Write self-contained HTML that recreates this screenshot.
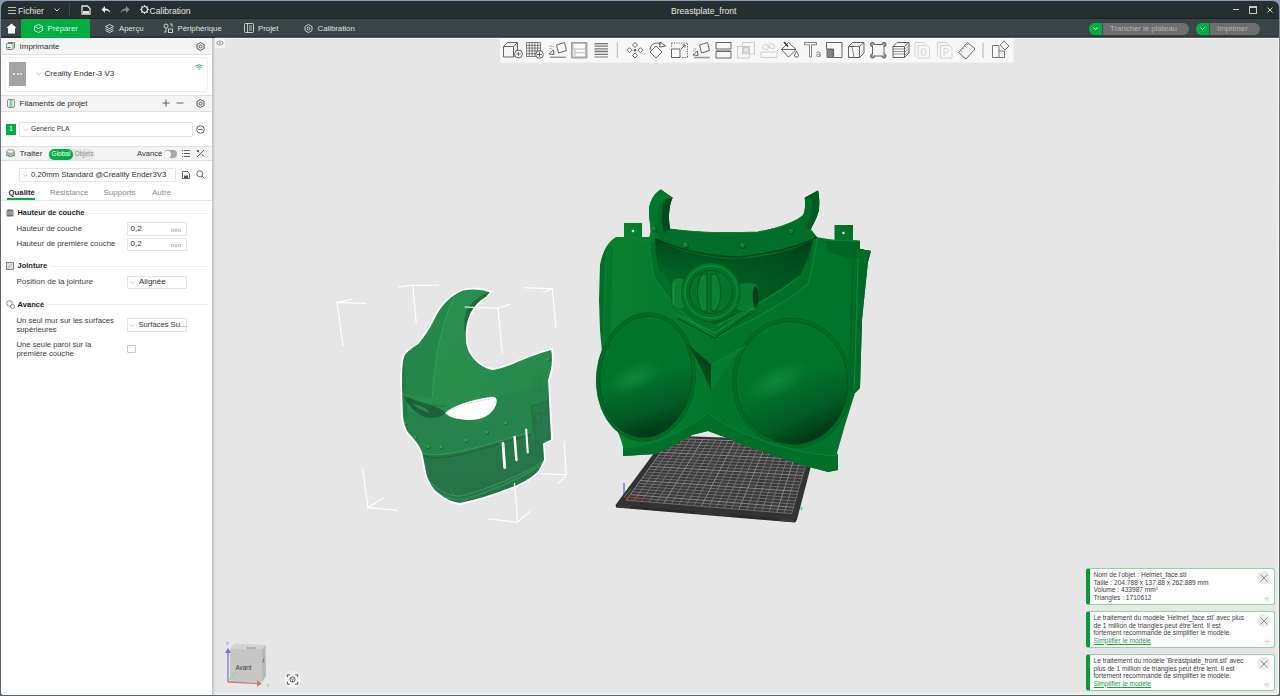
<!DOCTYPE html>
<html><head><meta charset="utf-8">
<style>
*{margin:0;padding:0;box-sizing:border-box}
html,body{width:1280px;height:696px;overflow:hidden;background:linear-gradient(180deg,#8a9ab2 0,#6f7883 60px,#5c6167 300px,#5e6369 696px);font-family:"Liberation Sans",sans-serif;}
.a{position:absolute}
#win{position:absolute;left:1px;top:1px;width:1278px;height:694px;overflow:hidden;border-radius:6px 6px 3px 3px;background:#e6e6e6}
#pg{position:absolute;left:-1px;top:-1px;width:1280px;height:696px}
.tt{color:#e6e8e8;font-size:8.6px;line-height:12px;white-space:nowrap}
.tab{color:#dfe2e2;font-size:7.8px;line-height:10px;white-space:nowrap}
.pt{color:#3a3a3a;font-size:8px;line-height:10px;white-space:nowrap}
.hd{color:#303030;font-size:8px;line-height:10px;white-space:nowrap}
.bold{font-weight:bold;color:#1e1e1e}
.inp{background:#fff;border:1px solid #e4e4e4;border-radius:1px}
.nt{color:#3c3c3c;font-size:6.6px;line-height:7.4px;white-space:nowrap}
svg{position:absolute;overflow:visible}
</style></head><body>
<div id="win"><div id="pg">
<!-- TITLE BAR -->
<div class="a" style="left:0;top:0;width:1280px;height:19px;background:#262e30;border-bottom:1px solid #1d2325"></div>
<div class="a" style="left:0;top:19px;width:1280px;height:19px;background:#3b4446;border-bottom:2px solid #2e3537"></div>
<!-- hamburger -->
<div class="a" style="left:8px;top:6.5px;width:8px;height:1.3px;background:#bcbcbc"></div>
<div class="a" style="left:8px;top:9.6px;width:8px;height:1.3px;background:#bcbcbc"></div>
<div class="a" style="left:8px;top:12.7px;width:8px;height:1.3px;background:#bcbcbc"></div>
<div class="a tt" style="left:18px;top:5px;">Fichier</div>
<svg style="left:54px;top:8px" width="6" height="4"><path d="M0.5 0.5 L3 3 L5.5 0.5" stroke="#d0d0d0" fill="none" stroke-width="1"/></svg>
<div class="a" style="left:69px;top:3px;width:1px;height:14px;background:#3e4648"></div>
<!-- save -->
<svg style="left:81px;top:5px" width="10" height="10"><path d="M1 1 H6.5 L9 3.5 V9 H1 Z" stroke="#e0e0e0" fill="none" stroke-width="1.3"/><rect x="2" y="6" width="6" height="2.5" fill="#e0e0e0"/></svg>
<!-- undo -->
<svg style="left:101px;top:5px" width="10" height="9"><path d="M4 1 L0.5 4.5 L4 8 V5.5 C6.5 5.5 8 6 9.5 8 C9 5 7 3.5 4 3.5 Z" fill="#e8e8e8"/></svg>
<!-- redo -->
<svg style="left:120px;top:5px" width="10" height="9"><path d="M6 1 L9.5 4.5 L6 8 V5.5 C3.5 5.5 2 6 0.5 8 C1 5 3 3.5 6 3.5 Z" fill="#8a9090"/></svg>
<!-- calib gear -->
<svg style="left:140px;top:5px" width="9" height="9"><circle cx="4.5" cy="4.5" r="3" stroke="#e0e0e0" fill="none" stroke-width="1.2"/><path d="M4.5 0 V2 M4.5 7 V9 M0 4.5 H2 M7 4.5 H9 M1.3 1.3 L2.6 2.6 M6.4 6.4 L7.7 7.7 M7.7 1.3 L6.4 2.6 M2.6 6.4 L1.3 7.7" stroke="#e0e0e0" stroke-width="1.2"/></svg>
<div class="a tt" style="left:149.5px;top:5px;">Calibration</div>
<div class="a tt" style="left:671px;top:5px;">Breastplate_front</div>
<!-- window controls -->
<div class="a" style="left:1233px;top:9px;width:6px;height:1px;background:#c8c8c8"></div>
<div class="a" style="left:1249px;top:6px;width:8px;height:8px;border:1px solid #c8c8c8;border-top-width:2px"></div>
<svg style="left:1267px;top:7px" width="6" height="6"><path d="M0.5 0.5 L5.5 5.5 M5.5 0.5 L0.5 5.5" stroke="#d0d0d0" stroke-width="1"/></svg>

<!-- TABS -->
<svg style="left:6px;top:23px" width="11" height="11"><path d="M5.5 0.5 L10.5 5 H9 V10.5 H2 V5 H0.5 Z" fill="#ffffff"/></svg>
<div class="a" style="left:21px;top:19px;width:69px;height:19px;background:#00ae42"></div>
<svg style="left:34px;top:24px" width="9" height="9"><path d="M4.5 0.5 L8.5 2.5 V6.5 L4.5 8.5 L0.5 6.5 V2.5 Z M0.5 2.5 L4.5 4.5 L8.5 2.5" stroke="#d8f5e0" fill="none" stroke-width="0.9"/></svg>
<div class="a tab" style="left:47.5px;top:24px;color:#d8f5e2">Préparer</div>
<svg style="left:105px;top:24px" width="9" height="9"><path d="M4.5 0.5 L8.5 2.5 L4.5 4.5 L0.5 2.5 Z M0.5 4.5 L4.5 6.5 L8.5 4.5 M0.5 6.5 L4.5 8.5 L8.5 6.5" stroke="#d8dcdc" fill="none" stroke-width="0.9"/></svg>
<div class="a tab" style="left:119px;top:24px;">Aperçu</div>
<svg style="left:163px;top:23px" width="10" height="10"><circle cx="3" cy="3" r="2" stroke="#d8dcdc" fill="none" stroke-width="0.9"/><rect x="5.5" y="6" width="4" height="3.5" stroke="#d8dcdc" fill="none" stroke-width="0.9"/><path d="M3 5 V9 H1 M7 1 H9 V4" stroke="#d8dcdc" fill="none" stroke-width="0.9"/></svg>
<div class="a tab" style="left:177.5px;top:24px;">Périphérique</div>
<svg style="left:244px;top:23px" width="10" height="10"><rect x="0.5" y="0.5" width="9" height="9" rx="1" stroke="#d8dcdc" fill="none" stroke-width="0.9"/><path d="M3.5 0.5 V9.5 M5 3 H8 M5 5 H8 M5 7 H8" stroke="#d8dcdc" stroke-width="0.8"/></svg>
<div class="a tab" style="left:258px;top:24px;">Projet</div>
<svg style="left:304px;top:24px" width="9" height="9"><path d="M4.5 0.5 L8 2.5 V6.5 L4.5 8.5 L1 6.5 V2.5 Z" stroke="#d8dcdc" fill="none" stroke-width="0.9"/><circle cx="4.5" cy="4.5" r="1.4" stroke="#d8dcdc" fill="none" stroke-width="0.9"/></svg>
<div class="a tab" style="left:317.5px;top:24px;">Calibration</div>
<!-- slice / print buttons -->
<div class="a" style="left:1089px;top:22.5px;width:100px;height:12px;border-radius:6px;background:#6e6e6e;overflow:hidden"><div class="a" style="left:0;top:0;width:12.5px;height:12px;background:#00ae42"></div><div class="a" style="left:12.5px;top:0;width:1px;height:12px;background:#4a5052"></div></div>
<svg style="left:1093px;top:27px" width="5" height="3"><path d="M0.5 0.5 L2.5 2.5 L4.5 0.5" stroke="#fff" fill="none" stroke-width="0.9"/></svg>
<div class="a tab" style="left:1110px;top:24px;color:#b4b4b4">Trancher le plateau</div>
<div class="a" style="left:1196px;top:22.5px;width:64px;height:12px;border-radius:6px;background:#6e6e6e;overflow:hidden"><div class="a" style="left:0;top:0;width:12.5px;height:12px;background:#00ae42"></div><div class="a" style="left:12.5px;top:0;width:1px;height:12px;background:#4a5052"></div></div>
<svg style="left:1200px;top:27px" width="5" height="3"><path d="M0.5 0.5 L2.5 2.5 L4.5 0.5" stroke="#fff" fill="none" stroke-width="0.9"/></svg>
<div class="a tab" style="left:1217px;top:24px;color:#b4b4b4">Imprimer</div>

<!-- LEFT PANEL -->
<div class="a" style="left:0;top:38px;width:212px;height:658px;background:#fff"></div>
<div class="a" style="left:212px;top:38px;width:3px;height:658px;background:linear-gradient(90deg,#bdbdbd,#d6d6d6 60%,#e0e0e0)"></div>
<!-- Imprimante header -->
<div class="a" style="left:0;top:38px;width:212px;height:17px;background:#f4f4f4;border-bottom:1px solid #e0e0e0"></div>
<svg style="left:6px;top:42px" width="9" height="8"><rect x="0.5" y="1.5" width="6.5" height="6" rx="0.8" stroke="#707070" fill="none" stroke-width="0.9"/><path d="M2 0.5 H8.5 V6.5" stroke="#707070" fill="none" stroke-width="0.9"/><rect x="1.5" y="5" width="3" height="1.3" fill="#00ae42"/></svg>
<div class="a hd" style="left:19.5px;top:42px;">Imprimante</div>
<svg style="left:196px;top:42px" width="9" height="9"><path d="M4.5 0.6 L8 2.5 V6.5 L4.5 8.4 L1 6.5 V2.5 Z" stroke="#555" fill="none" stroke-width="1"/><circle cx="4.5" cy="4.5" r="1.5" stroke="#555" fill="none" stroke-width="1"/></svg>
<!-- printer card -->
<div class="a" style="left:4px;top:57px;width:204px;height:35px;border:1px solid #efefef;border-radius:4px;background:#fff"></div>
<div class="a" style="left:9px;top:62px;width:17px;height:24px;background:#a3a3a3"></div>
<div class="a" style="left:13px;top:73px;width:2px;height:1.5px;background:#e0e0e0"></div>
<div class="a" style="left:16.5px;top:73px;width:2px;height:1.5px;background:#e0e0e0"></div>
<div class="a" style="left:20px;top:73px;width:2px;height:1.5px;background:#e0e0e0"></div>
<svg style="left:36px;top:72px" width="6" height="4"><path d="M0.5 0.5 L3 3 L5.5 0.5" stroke="#b0b0b0" fill="none" stroke-width="0.8"/></svg>
<div class="a hd" style="left:44.5px;top:69px;">Creality Ender-3 V3</div>
<svg style="left:195px;top:64px" width="8" height="6"><path d="M0.5 2 Q4 -0.5 7.5 2 M1.8 3.5 Q4 2 6.2 3.5" stroke="#00ae42" fill="none" stroke-width="0.9"/><circle cx="4" cy="5" r="0.7" fill="#00ae42"/></svg>
<!-- Filaments header -->
<div class="a" style="left:0;top:95px;width:212px;height:17px;background:#f4f4f4;border-top:1px solid #e0e0e0;border-bottom:1px solid #e0e0e0"></div>
<svg style="left:7px;top:99px" width="8" height="9"><rect x="0.5" y="0.5" width="7" height="8" rx="1.5" stroke="#808080" fill="none" stroke-width="0.9"/><rect x="2.5" y="1" width="3" height="7" fill="#7fd69f"/></svg>
<div class="a hd" style="left:19.5px;top:99px;">Filaments de projet</div>
<svg style="left:162px;top:99px" width="8" height="8"><path d="M4 0.5 V7.5 M0.5 4 H7.5" stroke="#666" stroke-width="1.1"/></svg>
<svg style="left:176px;top:99px" width="8" height="8"><path d="M0.5 4 H7.5" stroke="#666" stroke-width="1.1"/></svg>
<svg style="left:196px;top:99px" width="9" height="9"><path d="M4.5 0.6 L8 2.5 V6.5 L4.5 8.4 L1 6.5 V2.5 Z" stroke="#555" fill="none" stroke-width="1"/><circle cx="4.5" cy="4.5" r="1.5" stroke="#555" fill="none" stroke-width="1"/></svg>
<!-- filament row -->
<div class="a" style="left:6px;top:124px;width:10px;height:10.5px;background:#00ae42;color:#fff;font-size:8px;line-height:10.5px;text-align:center">1</div>
<div class="a inp" style="left:19px;top:122px;width:174px;height:14.5px;"></div>
<svg style="left:23px;top:128px" width="5" height="3"><path d="M0.5 0.5 L2.5 2.5 L4.5 0.5" stroke="#b8b8b8" fill="none" stroke-width="0.8"/></svg>
<div class="a pt" style="left:31px;top:124px;font-size:6.8px;">Generic PLA</div>
<svg style="left:196px;top:125px" width="9" height="9"><circle cx="4.5" cy="4.5" r="3.8" stroke="#555" fill="none" stroke-width="0.9"/><path d="M2.3 4.5 H6.7" stroke="#555" stroke-width="0.9"/></svg>
<!-- Traiter header -->
<div class="a" style="left:0;top:146px;width:212px;height:15px;background:#f4f4f4;border-top:1px solid #e0e0e0;border-bottom:1px solid #e0e0e0"></div>
<svg style="left:6px;top:149px" width="9" height="9"><ellipse cx="4.5" cy="2.5" rx="3.8" ry="1.8" stroke="#808080" fill="none" stroke-width="0.8"/><path d="M0.7 2.5 V6.5 Q4.5 9 8.3 6.5 V2.5 M0.7 4.5 Q4.5 7 8.3 4.5" stroke="#808080" fill="none" stroke-width="0.8"/><path d="M0.7 6 Q4.5 8.5 8.3 6" stroke="#00ae42" fill="none" stroke-width="0.9"/></svg>
<div class="a hd" style="left:19.5px;top:148.5px;">Traiter</div>
<div class="a" style="left:49px;top:149px;width:46px;height:10.5px;border-radius:5.25px;background:#e6e6e6"></div>
<div class="a" style="left:49px;top:149px;width:24px;height:10.5px;border-radius:5.25px;background:#00ae42"></div>
<div class="a" style="left:49px;top:150px;width:24px;font-size:6.5px;line-height:8.5px;color:#fff;text-align:center">Global</div>
<div class="a" style="left:73px;top:150px;width:22px;font-size:6.5px;line-height:8.5px;color:#8c8c8c;text-align:center">Objets</div>
<div class="a hd" style="left:137px;top:148.5px;font-size:7.6px;">Avancé</div>
<div class="a" style="left:163.5px;top:150px;width:13.5px;height:8px;border-radius:4px;background:#a8a8a8"></div>
<div class="a" style="left:164px;top:150.5px;width:7px;height:7px;border-radius:50%;background:#fff"></div>
<svg style="left:182px;top:150px" width="8" height="7"><path d="M0 0.5 H1 M2 0.5 H8 M0 3.5 H1 M2 3.5 H8 M0 6.5 H1 M2 6.5 H8" stroke="#555" stroke-width="0.9"/></svg>
<svg style="left:196px;top:149px" width="9" height="9"><path d="M1 8 L8 1 M1 1.5 L3 3.5 M6 5.5 L8 7.5" stroke="#555" stroke-width="1"/><circle cx="2" cy="2" r="1" fill="#555"/></svg>
<!-- preset -->
<div class="a inp" style="left:19px;top:168px;width:157px;height:13.5px;"></div>
<svg style="left:23px;top:174px" width="5" height="3"><path d="M0.5 0.5 L2.5 2.5 L4.5 0.5" stroke="#b8b8b8" fill="none" stroke-width="0.8"/></svg>
<div class="a hd" style="left:31px;top:169.5px;font-size:7.8px">0.20mm Standard @Creality Ender3V3</div>
<svg style="left:182px;top:171px" width="8" height="8"><path d="M0.5 0.5 H5.5 L7.5 2.5 V7.5 H0.5 Z" stroke="#555" fill="none" stroke-width="0.9"/><rect x="2" y="4.5" width="4" height="2.5" fill="#555"/></svg>
<svg style="left:196px;top:170px" width="9" height="9"><circle cx="3.8" cy="3.8" r="3" stroke="#555" fill="none" stroke-width="0.9"/><path d="M6 6 L8.5 8.5" stroke="#555" stroke-width="1"/></svg>
<!-- tabs -->
<div class="a hd" style="left:8.5px;top:187.5px;font-weight:bold;color:#2a2a2a;font-size:7.8px">Qualité</div>
<div class="a hd" style="left:50px;top:187.5px;color:#8a8a8a;font-size:7.75px">Résistance</div>
<div class="a hd" style="left:103.5px;top:187.5px;color:#8a8a8a">Supports</div>
<div class="a hd" style="left:152px;top:187.5px;color:#8a8a8a">Autre</div>
<div class="a" style="left:7px;top:198px;width:28px;height:2px;background:#00ae42"></div>
<div class="a" style="left:0;top:200px;width:212px;height:1px;background:#e6e6e6"></div>
<!-- Hauteur de couche section -->
<svg style="left:6px;top:209px" width="8" height="8"><rect x="0.5" y="0.5" width="7" height="7" rx="1.5" fill="#6a6a6a"/><path d="M0.5 3 H7.5 M0.5 5 H7.5" stroke="#eee" stroke-width="0.7"/></svg>
<div class="a hd bold" style="left:17.5px;top:207.5px;font-size:7.45px">Hauteur de couche</div>
<div class="a" style="left:88px;top:213px;width:119px;height:1px;background:#ececec"></div>
<div class="a hd" style="left:16.5px;top:224px;color:#3c3c3c;font-size:7.75px">Hauteur de couche</div>
<div class="a inp" style="left:126.5px;top:222px;width:60px;height:13.5px;"></div>
<div class="a hd" style="left:130.5px;top:224px;color:#303030">0,2</div>
<div class="a" style="left:171px;top:227px;font-size:6px;line-height:7px;color:#8a8a8a">mm</div>
<div class="a hd" style="left:16.5px;top:239px;color:#3c3c3c;font-size:7.8px">Hauteur de première couche</div>
<div class="a inp" style="left:126.5px;top:237.5px;width:60px;height:13.5px;"></div>
<div class="a hd" style="left:130.5px;top:239px;color:#303030">0,2</div>
<div class="a" style="left:171px;top:242px;font-size:6px;line-height:7px;color:#8a8a8a">mm</div>
<!-- Jointure -->
<svg style="left:6px;top:262px" width="8" height="8"><rect x="0.5" y="0.5" width="7" height="7" stroke="#777" fill="#ddd" stroke-width="0.9"/><path d="M2.5 5.5 L5.5 2.5" stroke="#888" stroke-width="0.7"/></svg>
<div class="a hd bold" style="left:17.5px;top:261px;font-size:7.5px">Jointure</div>
<div class="a" style="left:50px;top:266px;width:157px;height:1px;background:#ececec"></div>
<div class="a hd" style="left:16.5px;top:277px;color:#3c3c3c">Position de la jointure</div>
<div class="a inp" style="left:126.5px;top:275.5px;width:60px;height:13.5px;"></div>
<svg style="left:130px;top:281px" width="5" height="3"><path d="M0.5 0.5 L2.5 2.5 L4.5 0.5" stroke="#b8b8b8" fill="none" stroke-width="0.8"/></svg>
<div class="a hd" style="left:139px;top:277px;color:#303030">Alignée</div>
<!-- Avancé -->
<svg style="left:6px;top:300px" width="9" height="9"><circle cx="3.5" cy="3.5" r="2.8" stroke="#777" fill="none" stroke-width="0.9"/><circle cx="6.5" cy="6.5" r="2" stroke="#777" fill="#fff" stroke-width="0.9"/></svg>
<div class="a hd bold" style="left:17.5px;top:299.5px;font-size:7.6px">Avancé</div>
<div class="a" style="left:46px;top:304px;width:161px;height:1px;background:#ececec"></div>
<div class="a hd" style="left:16.5px;top:316px;color:#3c3c3c;font-size:7.7px">Un seul mur sur les surfaces</div>
<div class="a hd" style="left:16.5px;top:324.5px;color:#3c3c3c;font-size:7.7px">supérieures</div>
<div class="a inp" style="left:126.5px;top:318px;width:60px;height:13.5px;"></div>
<svg style="left:130px;top:323.5px" width="5" height="3"><path d="M0.5 0.5 L2.5 2.5 L4.5 0.5" stroke="#b8b8b8" fill="none" stroke-width="0.8"/></svg>
<div class="a hd" style="left:138.5px;top:319.5px;color:#303030;font-size:7.6px">Surfaces Su...</div>
<div class="a hd" style="left:16.5px;top:339.5px;color:#3c3c3c;font-size:7.7px">Une seule paroi sur la</div>
<div class="a hd" style="left:16.5px;top:348.5px;color:#3c3c3c;font-size:7.7px">première couche</div>
<div class="a" style="left:127px;top:345px;width:8.5px;height:8px;border:1px solid #c8c8c8;border-radius:1px;background:#fff"></div>


<!--SCENE-->
<svg style="left:0;top:0" width="1280" height="696" viewBox="0 0 1280 696">
<defs>
<radialGradient id="domeL" cx="0.45" cy="0.45" r="0.6"><stop offset="0" stop-color="#259136"/><stop offset="0.6" stop-color="#1b7a2b"/><stop offset="1" stop-color="#0d5319"/></radialGradient>
<radialGradient id="domeR" cx="0.4" cy="0.42" r="0.62"><stop offset="0" stop-color="#25903a"/><stop offset="0.6" stop-color="#1a782b"/><stop offset="1" stop-color="#0b4f17"/></radialGradient>
<linearGradient id="bodyG" x1="0" y1="0" x2="1" y2="0"><stop offset="0" stop-color="#137024"/><stop offset="0.15" stop-color="#1c7f2c"/><stop offset="0.85" stop-color="#1b7d2c"/><stop offset="1" stop-color="#147326"/></linearGradient>
<linearGradient id="helmG" x1="0" y1="0" x2="0" y2="1"><stop offset="0" stop-color="#2a934f"/><stop offset="0.5" stop-color="#268b49"/><stop offset="1" stop-color="#207d3f"/></linearGradient>
</defs>
<!-- toolbar bg -->
<rect x="500" y="38" width="513.5" height="24.6" fill="#f7f7f7"/>
<g stroke="#555" stroke-width="0.9" fill="none" stroke-linejoin="round">
<!-- 1 cube+ -->
<path d="M503.5,46.5 H513.5 V57 H503.5 Z M503.5,46.5 L507.5,42.5 H517.5 L513.5,46.5 M517.5,42.5 V50.5 M513.5,57 L515,55.5"/>
<circle cx="518.5" cy="54" r="3.9" fill="#f7f7f7"/><path d="M518.5,51.8 V56.2 M516.3,54 H520.7" stroke-width="0.8"/>
<!-- 2 grid+ -->
<path d="M526.5,42.5 H540.5 V56.5 H526.5 Z M529.3,42.5 V56.5 M532.1,42.5 V56.5 M534.9,42.5 V56.5 M537.7,42.5 V56.5 M526.5,45.3 H540.5 M526.5,48.1 H540.5 M526.5,50.9 H540.5 M526.5,53.7 H540.5" stroke-width="0.7"/>
<circle cx="539.5" cy="54.5" r="3.8" fill="#f7f7f7"/><path d="M539.5,52 V57 M537,54.5 H542"/>
<!-- 3 orient -->
<path d="M556.5,45 L564.5,42.5 L566.5,50.5 L558.5,53 Z"/>
<path d="M549.5,46 L553.5,46.5 M549.5,48.5 L552.5,49" stroke-width="0.7" stroke-dasharray="1 0.8"/>
<path d="M549,54 L553.5,50 L554,54.5 Z"/>
<path d="M550,57.2 H566" stroke="#999" stroke-width="1.6"/>
<!-- 4 frame -->
<rect x="571.5" y="42.5" width="15.5" height="15.5" fill="#bbb" stroke="#999"/>
<rect x="573.5" y="44" width="11.5" height="4.5" fill="#fafafa" stroke="none"/>
<rect x="575.5" y="49.5" width="9.5" height="2.8" fill="#fafafa" stroke="none"/>
<rect x="575.5" y="53.3" width="9.5" height="3" fill="#fafafa" stroke="none"/>
<rect x="573.3" y="49.5" width="1.2" height="7" fill="#fafafa" stroke="none"/>
<!-- 5 layers -->
<path d="M594.5,43.5 H608 M594.5,46.2 H608 M594.5,48.9 H608 M594.5,51.6 H608 M594.5,54.3 H608 M594.5,57 H608" stroke="#777" stroke-width="1.2"/>
<path d="M594.5,45 H608 M594.5,50 H608" stroke="#bbb" stroke-width="1.4"/>
<!-- sep -->
<path d="M617.3,42.5 V58" stroke="#aaa"/>
<!-- 6 move -->
<path d="M635,42.5 L637.5,45 L635,47.5 L632.5,45 Z M635,53 L637.5,55.5 L635,58 L632.5,55.5 Z M627,50.2 L629.5,47.7 L632,50.2 L629.5,52.7 Z M638,50.2 L640.5,47.7 L643,50.2 L640.5,52.7 Z"/>
<circle cx="635" cy="50.2" r="0.9" fill="#555"/>
<!-- 7 rotate -->
<path d="M656,46 L662,52 L656,58 L650,52 Z"/>
<path d="M650,50 C650,44 656,41.5 661,44"/>
<path d="M660,42 L665.5,46 L659.5,47 Z"/>
<!-- 8 scale -->
<rect x="671.5" y="49" width="8.5" height="8.5"/>
<path d="M671.5,43 H687.5 V57.5 M671.5,43 V47 M682,57.5 H687.5" stroke-dasharray="1.2 1.2"/>
<path d="M681,49 L685,45 M682.5,45 H685 V47.5"/>
<!-- 9 lay flat -->
<path d="M699.5,45 L707.5,42.5 L709.5,50.5 L701.5,53 Z"/>
<path d="M693.5,49 L697,48.5 M693.5,51 L696,50.8" stroke-width="0.7" stroke-dasharray="1 0.8"/>
<path d="M693,55 L697.5,51 L698,55.5 Z"/>
<path d="M694,57.5 H710" stroke="#999" stroke-width="1.6"/>
<!-- 10 split -->
<rect x="716" y="42.5" width="15" height="6.5"/><rect x="716" y="51.5" width="15" height="6.5"/>
<path d="M716,50.2 H731" stroke="#aaa" stroke-width="1.4"/>
</g>
<g stroke="#c8c8c8" stroke-width="0.9" fill="none">
<!-- 11 boolean faded -->
<rect x="737.5" y="46.5" width="12" height="11.5"/><rect x="742.5" y="42.5" width="12" height="11.5"/>
<rect x="743.5" y="47.5" width="5" height="5" fill="#e5e5e5"/>
<!-- 12 cut faded -->
<path d="M761,52 H777 V57.5 H761 Z M762,48 L765,44 L770,46 L767,50 Z M769,43 L775,45.5 L773,49 L767,46.5"/>
</g>
<g stroke="#555" stroke-width="0.9" fill="none" stroke-linejoin="round">
<!-- 13 paint -->
<path d="M781.5,49.5 L788.5,42.5 L796,49.5 L788.5,57 Z M781.5,49.5 H796"/>
<path d="M784,42 L788,46.5" stroke="#333" stroke-width="1.6"/>
<path d="M796.5,51 C795,53.5 794.5,55 794.5,56 C794.5,57.5 798.5,57.5 798.5,56 C798.5,55 798,53.5 796.5,51 Z"/>
<!-- 14 Ta -->
<path d="M804.5,42.5 H816.5 V44.8 H811.5 V57 H809.5 V44.8 H804.5 Z" stroke="#777"/>
<path d="M816.5,53 C816.5,51.5 820,51.5 820,53 V57 M816.3,55.3 C816.3,53.8 820,53.8 820,55.3 C820,57 816.3,57 816.3,55.3" stroke="#777" stroke-width="0.8"/>
<!-- 15 height range -->
<path d="M826.5,42.5 H842 V57.5 H833.5 V49 H826.5 Z"/>
<rect x="827" y="49.5" width="6" height="8" fill="#888" stroke="#666"/>
<!-- 16 cube cut -->
<path d="M848.5,46.5 H859.5 V57.5 H848.5 Z M848.5,46.5 L852.5,42.5 H864 L859.5,46.5 M864,42.5 V53 L859.5,57.5"/>
<path d="M852,47 L854,57" stroke-width="0.7"/>
<!-- 17 corners -->

<circle cx="872.5" cy="44.5" r="2.1" fill="#999"/><circle cx="884" cy="44.5" r="2.1" fill="#999"/><circle cx="872.5" cy="56" r="2.1" fill="#999"/><circle cx="884" cy="56" r="2.1" fill="#999"/><rect x="873" y="45" width="10.5" height="10.5" fill="#f7f7f7" stroke="none"/><path d="M872.5,46.5 V54 M884,46.5 V54 M874.5,44.5 H882 M874.5,56 H882"/>
<!-- 18 layered cube -->
<path d="M893,46.5 H904.5 V57.5 H893 Z M893,46.5 L897,42.5 H909 L904.5,46.5 M909,42.5 V53 L904.5,57.5"/>
<path d="M893,49 H904.5 M893,51.5 H904.5 M893,54 H904.5 M905,49 L909,45.5 M905,52 L909,48.5 M905,55 L909,51.5" stroke-width="0.6"/>
</g>
<g stroke="#cfcfcf" stroke-width="0.9" fill="none">
<!-- 19 O -->
<path d="M915,57 V42.5 H924 L926,44.5 M918,58 V45.5 H927 L929.5,48 V58 Z"/>
<ellipse cx="923.5" cy="52" rx="2.5" ry="3.5"/>
<!-- 20 P -->
<path d="M937.5,57 V42.5 H946.5 L948.5,44.5 M940.5,58 V45.5 H949.5 L952,48 V58 Z"/>
<path d="M944,56 V48.5 H946.5 C949,48.5 949,52.5 946.5,52.5 H944"/>
</g>
<g stroke="#555" stroke-width="0.9" fill="none" stroke-linejoin="round">
<!-- 21 ruler -->
<path d="M958.5,52.5 L967.5,42.5 L975,49 L966,59 Z"/>
<path d="M961,50.5 L962.5,52 M963,48.3 L964,49.3 M965,46 L966.5,47.5 M967,44 L968,45" stroke-width="0.7"/>
<!-- sep -->
<path d="M983,42.5 V58" stroke="#aaa"/>
<!-- 22 assemble -->
<path d="M992.5,45.5 H999 V57.5 H992.5 Z M999,51 H1004.5 V57.5 H999 M1000,45 L1004,41 L1009,46 L1005,50 Z" stroke="#666"/>
</g>
<!-- viewport small icon -->
<rect x="215" y="38" width="10" height="10" fill="#f4f4f4"/>
<path d="M218.5,41 L216.5,43 L218.5,45 M219.9,40.5 V45.5 M221.3,41 L223.3,43 L221.3,45" stroke="#666" fill="none" stroke-width="0.8"/>

<!-- BED -->
<path d="M667,435.5 L817.5,441 L797,519.5 L795.5,522 L616,507 L615.5,505 Z" fill="#333333"/>
<path d="M616,505 L795.5,520 L795,522.5 L616,507.5 Z" fill="#2a2a2a"/>
<path d="M618,505 L630,506 L630,508 L618,507.5 Z M695,511.5 L730,514.5 L730,516 L695,513 Z M780,518.5 L794,519.8 L794,522 L780,521 Z" fill="#3a3a3a"/>
<path d="M670.8,438.3 L811.8,443.7 L791.7,513.6 L626.2,500.2 Z" fill="#393939"/>
<path d="M677.2,438.5L633.8,500.8M683.6,438.7L641.3,501.4M690.0,439.0L648.8,502.0M696.4,439.2L656.3,502.6M709.2,439.7L671.4,503.9M715.6,440.0L678.9,504.5M722.1,440.2L686.4,505.1M728.5,440.5L693.9,505.7M741.3,441.0L709.0,506.9M747.7,441.2L716.5,507.5M754.1,441.5L724.0,508.1M760.5,441.7L731.5,508.7M773.4,442.2L746.6,510.0M779.8,442.4L754.1,510.6M786.2,442.7L761.6,511.2M792.6,442.9L769.1,511.8M805.4,443.4L784.2,513.0M811.8,443.7L791.7,513.6M668.7,441.1L810.9,446.8M666.7,443.9L810.0,450.0M664.7,446.7L809.1,453.2M662.7,449.5L808.2,456.4M658.6,455.2L806.3,462.7M656.6,458.0L805.4,465.9M654.6,460.8L804.5,469.1M652.5,463.6L803.6,472.3M648.5,469.2L801.8,478.6M646.5,472.0L800.8,481.8M644.4,474.9L799.9,485.0M642.4,477.7L799.0,488.2M638.4,483.3L797.2,494.5M636.4,486.1L796.3,497.7M634.3,488.9L795.4,500.9M632.3,491.8L794.4,504.1M628.3,497.4L792.6,510.4M626.2,500.2L791.7,513.6" stroke="#7e7e7e" stroke-width="0.75" fill="none"/>
<path d="M670.8,438.3L626.2,500.2M702.8,439.5L663.8,503.3M734.9,440.7L701.4,506.3M766.9,441.9L739.0,509.3M799.0,443.2L776.7,512.4M670.8,438.3L811.8,443.7M660.6,452.3L807.3,459.6M650.5,466.4L802.7,475.5M640.4,480.5L798.1,491.4M630.3,494.6L793.5,507.3" stroke="#8c8c8c" stroke-width="0.9" fill="none"/>
<path d="M624,497 V483" stroke="#2233cc" stroke-width="0.9"/>
<path d="M624,497 L645,498.5" stroke="#cc2222" stroke-width="0.9"/>
<path d="M624,497 L631,489" stroke="#22aa33" stroke-width="0.9"/>
<path d="M800,508 L803,508 M801.5,508 V510" stroke="#22cc66" stroke-width="0.8"/>
<!-- BREASTPLATE -->
<defs>
<radialGradient id="dL" cx="0.42" cy="0.5" r="0.62" fx="0.38" fy="0.55"><stop offset="0" stop-color="#0c863a"/><stop offset="0.45" stop-color="#00752b"/><stop offset="0.8" stop-color="#005c22"/><stop offset="1" stop-color="#003d17"/></radialGradient>
<radialGradient id="dR" cx="0.42" cy="0.48" r="0.62" fx="0.36" fy="0.5"><stop offset="0" stop-color="#0e883b"/><stop offset="0.45" stop-color="#00742b"/><stop offset="0.8" stop-color="#005521"/><stop offset="1" stop-color="#003415"/></radialGradient>
<linearGradient id="neckG" x1="0.75" y1="0" x2="0.35" y2="1"><stop offset="0" stop-color="#003815"/><stop offset="0.35" stop-color="#00481b"/><stop offset="0.7" stop-color="#006224"/><stop offset="1" stop-color="#006e28"/></linearGradient>
<linearGradient id="bodyG2" x1="0" y1="0" x2="1" y2="0"><stop offset="0" stop-color="#006a26"/><stop offset="0.06" stop-color="#08802f"/><stop offset="0.5" stop-color="#00752b"/><stop offset="0.9" stop-color="#00742b"/><stop offset="0.97" stop-color="#006b27"/><stop offset="1" stop-color="#0a7e30"/></linearGradient>
</defs>
<path d="M660.8,189.6 L672.6,197.8 C669,205 668,218 670,229 C690,232 720,233.5 758,232 C780,228 795,222 803,215.6 C806,208 805,202 804.7,197.8 L818,190.4 C819.5,197 819.5,205 818.8,210 C817,218 813,225 810.6,229 L816,237 L834.5,240 L834.5,225 L853,225 L853,240 L860,241 L860,249 L871,251 L868,262 L864,300 L862,320 L860,388 L855,393 L845,425 L837,453 L838,455 L838,470 L828,472 C800,465 760,452 727,438 L708,431 L692,435 C680,442 665,450 656,454 L623,456 L623,447 C620,432 608,415 602,400 L598,385 L598,370 L602,352 L600,330 L599,300 L600,265 C603,250 608,242 616,237 L624,237 L624,223 L642,223 L642,237 L649,237 C652,232 649,222 649,210 C650,200 655,193 660.8,189.6 Z" fill="url(#bodyG2)"/>
<circle cx="633" cy="231" r="1.3" fill="#e5e5e5"/>
<circle cx="843.5" cy="233" r="1.3" fill="#e5e5e5"/>
<path d="M616,237 L649,237 L652,243 L622,246 Z" fill="#0a7d30"/>
<path d="M825,240 L860,241 L860,249 L871,251 L862,262 L828,252 Z" fill="#006626"/>
<path d="M825,240 L860,241" stroke="#0b8636" stroke-width="1" fill="none"/>
<path d="M860,249 L871,251 L868,262 L864,300 L862,320 L860,388 L855,393 L851,392 C853,350 855,300 856,262 Z" fill="#006b27"/>
<path d="M858,258 C857,300 856,340 854,390" stroke="#139040" stroke-width="1.1" fill="none" opacity="0.8"/>
<path d="M853,262 C852,300 851,340 849,392" stroke="#005a21" stroke-width="1" fill="none" opacity="0.8"/>
<path d="M607,252 C605,280 604,315 604,350" stroke="#10893a" stroke-width="1.2" fill="none" opacity="0.7"/>
<path d="M612,248 C610,280 609,315 609,345" stroke="#006626" stroke-width="0.8" fill="none" opacity="0.6"/>
<!-- V frame (outer) -->
<path d="M649,240 C650,255 652,268 654,277 C665,295 690,325 716,337 C745,325 790,300 808,284 C812,270 815,255 817,237 C800,245 770,254 740,256 C700,256 670,250 649,240 Z" fill="#006f28"/>
<path d="M649,240 C650,255 652,268 654,277 C665,295 690,325 716,337 C745,325 790,300 808,284 C812,270 815,255 817,237" stroke="#0c8636" stroke-width="1.2" fill="none"/>
<!-- neck dark interior -->
<defs>
<linearGradient id="shadG" x1="0" y1="0" x2="0" y2="1"><stop offset="0" stop-color="#003314" stop-opacity="0.7"/><stop offset="0.4" stop-color="#003c17" stop-opacity="0.35"/><stop offset="1" stop-color="#004a1b" stop-opacity="0"/></linearGradient>
<linearGradient id="shadR" x1="0" y1="0" x2="1" y2="0"><stop offset="0" stop-color="#003c17" stop-opacity="0"/><stop offset="0.55" stop-color="#003c17" stop-opacity="0.25"/><stop offset="1" stop-color="#003c17" stop-opacity="0.55"/></linearGradient>
</defs>
<path d="M655,238 C656,252 658,264 661,272 C675,292 695,313 716,326 C745,312 780,292 800,276 C806,262 810,250 813,240 C795,250 768,257 738,259 C705,259 675,250 655,238 Z" fill="#006626"/>
<path d="M655,238 C656,252 658,264 661,272 C675,292 695,313 716,326 C745,312 780,292 800,276 C806,262 810,250 813,240 C795,250 768,257 738,259 C705,259 675,250 655,238 Z" fill="url(#shadR)"/>
<path d="M655,238 C675,250 705,259 738,259 C768,257 795,250 813,240 L809,262 C790,275 760,282 730,284 C700,284 675,275 657,262 Z" fill="url(#shadG)"/>
<path d="M661,272 C675,292 695,313 716,326 C745,312 780,292 800,276" stroke="#0a8535" stroke-width="1.5" fill="none"/>
<path d="M655,240 C656,252 658,264 661,272 C675,292 695,313 716,326" stroke="#004f1d" stroke-width="0.8" fill="none"/>
<!-- collar band -->
<path d="M660.8,189.6 L672.6,197.8 C669,205 668,218 670,229 C690,232 720,233.5 758,232 C780,228 795,222 803,215.6 C806,208 805,202 804.7,197.8 L818,190.4 C819.5,197 819.5,205 818.8,210 C817,218 813,225 810.6,229 L817,237 C800,246 780,252 740,257 C710,257 680,250 656,239 C652,232 649,222 649,210 C650,200 655,193 660.8,189.6 Z" fill="#006d28"/>
<path d="M672.6,197.8 C669,205 668,218 670,229 L664,233 C661,222 661,208 665,199 Z" fill="#004a1b"/>
<path d="M660.8,189.6 L672.6,197.8 L665,199 C660,203 656,210 655,218 C654,226 656,233 659,238 L656,239 C652,232 649,222 649,210 C650,200 655,193 660.8,189.6 Z" fill="#007a2d"/>
<path d="M804.7,197.8 L818,190.4 C819.5,197 819.5,205 818.8,210 C817,218 813,225 810.6,229 L806,228 C810,220 812,210 812,200 Z" fill="#005a21"/>
<path d="M670,229 C690,232 720,233.5 758,232 C780,228 795,222 803,215.6" stroke="#0a7f31" stroke-width="1.2" fill="none"/>
<path d="M656,239 C680,250 710,257 740,257 C780,252 800,246 817,237" stroke="#003a16" stroke-width="1.3" fill="none"/>
<path d="M660,236 C685,247 712,251 740,251 C775,248 800,238 812,228" stroke="#007d2e" stroke-width="0.8" fill="none" opacity="0.7"/>
<g fill="#004d1c"><circle cx="654.5" cy="229.5" r="2.5"/><circle cx="686" cy="246" r="2.8"/><circle cx="743" cy="246.5" r="2.8"/><circle cx="791.5" cy="232" r="2.8"/></g>
<g fill="#0a8033"><circle cx="654" cy="228.5" r="2.1"/><circle cx="685.5" cy="245" r="2.4"/><circle cx="742.5" cy="245.5" r="2.4"/><circle cx="791" cy="231" r="2.4"/></g>
<g fill="#189442"><circle cx="653.5" cy="227.8" r="0.9"/><circle cx="684.8" cy="244.2" r="1"/><circle cx="741.8" cy="244.7" r="1"/><circle cx="790.3" cy="230.2" r="1"/></g>
<!-- medallion -->
<rect x="671.5" y="278" width="15" height="31" rx="6" fill="#0a7f31" stroke="#005a21" stroke-width="0.6"/>
<path d="M674,283 C673,290 673,298 674,305" stroke="#1a9040" stroke-width="1.2" fill="none"/>
<rect x="735" y="283" width="23.5" height="28.5" rx="7" fill="#067c2f" stroke="#005a21" stroke-width="0.6"/>
<ellipse cx="755.5" cy="297" rx="2.8" ry="11" fill="#003f17"/>
<circle cx="711" cy="292" r="29.5" fill="#00772c" stroke="#005520" stroke-width="0.8"/>
<circle cx="711" cy="292" r="26" fill="#006e28" stroke="#0d8837" stroke-width="1.4"/>
<circle cx="711" cy="292" r="21.5" fill="#00742a" stroke="#004f1d" stroke-width="0.9"/>
<path d="M702,274 C696,283 696,302 702,311 L707,311 L707,274 Z" fill="#0a8233" stroke="#004d1c" stroke-width="0.9"/>
<path d="M716,274 C722,283 722,302 716,311 L711,311 L711,274 Z" fill="#0a8233" stroke="#004d1c" stroke-width="0.9"/>
<!-- domes -->
<defs>
<linearGradient id="dV" x1="0.3" y1="0" x2="0.6" y2="1"><stop offset="0" stop-color="#00772c"/><stop offset="0.5" stop-color="#00732b"/><stop offset="0.78" stop-color="#005c23"/><stop offset="1" stop-color="#003414"/></linearGradient>
<radialGradient id="hl" cx="0.5" cy="0.5" r="0.5"><stop offset="0" stop-color="#169443" stop-opacity="0.6"/><stop offset="1" stop-color="#1c9a48" stop-opacity="0"/></radialGradient>
</defs>
<ellipse cx="646" cy="377" rx="49.5" ry="64.5" fill="#006b27" stroke="#005d22" stroke-width="0.8" transform="rotate(6 646 377)"/>
<ellipse cx="646" cy="377" rx="46" ry="61" fill="url(#dV)" stroke="#004f1d" stroke-width="0.7" transform="rotate(6 646 377)"/>
<ellipse cx="634" cy="378" rx="30" ry="14" fill="url(#hl)" transform="rotate(-25 634 378)"/>
<ellipse cx="792" cy="383" rx="59.5" ry="65" fill="#006b27" stroke="#005d22" stroke-width="0.8" transform="rotate(-6 792 383)"/>
<ellipse cx="792" cy="383" rx="56" ry="61.5" fill="url(#dV)" stroke="#004f1d" stroke-width="0.7" transform="rotate(-6 792 383)"/>
<ellipse cx="777" cy="381" rx="34" ry="15" fill="url(#hl)" transform="rotate(-25 777 381)"/>
<!-- inner V groove between domes -->
<path d="M686.5,343 L711,365 L711,392 C705,375 697,358 686.5,343 Z" fill="#004a1b"/>
<path d="M686.5,343 L711,365 L711,370 C703,360 695,351 686.5,343 Z" fill="#003a16"/>
<path d="M745.5,346 L711,365 L711,392 C720,375 732,358 745.5,346 Z" fill="#007f30"/>
<path d="M711,365 L745.5,346" stroke="#0b8a37" stroke-width="0.9" fill="none"/>
<path d="M678,318.6 L715,338 L751,313" stroke="#00501d" stroke-width="1.2" fill="none"/>
<path d="M676,314 L715,333 L753,308" stroke="#118d3c" stroke-width="1.3" fill="none"/>
<!-- lower flange -->
<path d="M623,447 C640,446 660,440 680,430 C690,425 700,418 708,412 C730,428 780,452 838,455 L838,470 L828,472 C800,465 760,452 727,438 L708,431 L692,435 C680,442 665,450 656,454 L623,456 Z" fill="#007029"/>
<path d="M623,448 C640,447 660,441 680,431 C690,426 700,419 708,413 C730,429 780,453 838,456" stroke="#0c8636" stroke-width="1" fill="none"/>
<!-- HELMET -->
<defs>
<linearGradient id="hJaw" x1="0" y1="0" x2="0" y2="1"><stop offset="0" stop-color="#287848"/><stop offset="1" stop-color="#257244"/></linearGradient>
<linearGradient id="hTop" x1="0" y1="0" x2="1" y2="1"><stop offset="0" stop-color="#28914f"/><stop offset="0.6" stop-color="#278c4b"/><stop offset="1" stop-color="#237d45"/></linearGradient>
<clipPath id="hclip"><path d="M491,292 C484,288 470,288 462,290 C450,295 440,305 433,320 C428,330 422,338 418,343 C412,347 405,351 403,357 C401,365 401,375 401,383 L402,416 C403,424 405,430 408,434 C414,440 419,447 421,452 C423,460 424,468 426,476 C429,484 432,490 438,494 C444,499 450,503 460,504 C480,500 500,493 517,486 C528,481 536,476 540,470 L545,460 L544,444 L552,440 L550,401 L549,380 L551,373 C553,366 554,360 552,349 C540,352 530,356 520,360 C510,364 500,369 493,369 C483,368 474,360 469,350 C465,340 466,325 471,314 C475,306 482,300 487,297 L491,292 Z"/></clipPath>
</defs>
<path d="M491,292 C484,288 470,288 462,290 C450,295 440,305 433,320 C428,330 422,338 418,343 C412,347 405,351 403,357 C401,365 401,375 401,383 L402,416 C403,424 405,430 408,434 C414,440 419,447 421,452 C423,460 424,468 426,476 C429,484 432,490 438,494 C444,499 450,503 460,504 C480,500 500,493 517,486 C528,481 536,476 540,470 L545,460 L544,444 L552,440 L550,401 L549,380 L551,373 C553,366 554,360 552,349 C540,352 530,356 520,360 C510,364 500,369 493,369 C483,368 474,360 469,350 C465,340 466,325 471,314 C475,306 482,300 487,297 L491,292 Z" fill="url(#hTop)"/>
<g clip-path="url(#hclip)">
<!-- crest inner dark face -->
<path d="M492,291 L487,297 C482,300 475,306 471,314 C466,325 465,340 469,350 C464,338 463,323 466,312 C471,301 481,295 492,291 Z" fill="#1d6b3b"/>
<!-- cheek left face -->
<path d="M418,343 C412,347 405,351 403,357 C401,365 401,375 401,383 L402,416 L409,420 C407,400 408,370 418,343 Z" fill="#27864a"/>
<!-- mid band -->
<path d="M395,405 C420,418 440,416 455,412 C480,404 510,392 552,385 L560,430 C520,440 470,452 420,458 L395,440 Z" fill="#25854a"/>
<!-- jaw -->
<path d="M419,452 C440,460 470,450 550,426 L560,520 L400,520 Z" fill="url(#hJaw)"/>
<path d="M419,452 C440,460 470,450 550,426" stroke="#3a9c5c" stroke-width="1" fill="none"/>
<path d="M421,455 C440,463 470,453 550,429" stroke="#1f5e37" stroke-width="0.8" fill="none"/>
<path d="M426,478 C431,488 440,496 452,499 C458,500 462,500 466,499 C490,491 520,479 543,464" stroke="#2f8a52" stroke-width="2.2" fill="none"/><path d="M428,480 C440,492 450,497 462,496 C490,488 520,476 544,461" stroke="#3c9e60" stroke-width="0.9" fill="none"/>
<path d="M450,489 L455,496" stroke="#38915a" stroke-width="0.9"/>
<!-- ear module -->
<path d="M531,406 L548,401 L552,402 L552,440 L544,444 L531,441 Z" fill="#2a7d48"/>
<path d="M531,406 L548,401 L549,439 L536,442 Z" fill="#27784a" stroke="#1f6a3d" stroke-width="0.6"/>
<rect x="535" y="413" width="6" height="10" fill="none" stroke="#1f6a3d" stroke-width="0.6"/>
<path d="M534,380 L540,378 L540,390 L534,392 Z" fill="none" stroke="#237a44" stroke-width="0.6"/>
<!-- brow shadow -->
<path d="M455,296 C447,310 440,335 436,360 C434,375 433,388 432,398 L400,394 L400,340 C420,330 440,305 455,296 Z" fill="#25874a" opacity="0.9"/>
<path d="M455,296 C447,310 440,335 436,360 C434,375 433,388 432,398" stroke="#36a262" stroke-width="1" fill="none" opacity="0.8"/>
<path d="M401,345 C404,360 405,390 406,420" stroke="#237c45" stroke-width="3" fill="none"/>
<path d="M405,396 C414,400 424,403 433,406 C439,408 443,410 446,413 C440,418 430,419 422,416 C414,412 408,404 405,399 Z" fill="#1d6039"/>
<path d="M412,403 C417,408 423,411 430,413 L425,408 Z" fill="#2a8a4c"/>
<path d="M403,394 C415,400 430,404 446,404 C466,400 495,390 528,384" stroke="#2a8e4d" stroke-width="1.6" fill="none"/>
<path d="M404,396.5 C416,402 430,406 446,406.5" stroke="#1f6d3e" stroke-width="0.8" fill="none"/>
</g>
<!-- eye hole -->
<path d="M445,413 C452,406 470,400 490,397 C496,396 498,399 496,405 C492,415 482,420 470,420 C460,420 450,418 445,413 Z" fill="#ffffff"/>
<path d="M447,412 C455,407 472,402 490,399 C495,398 496,400 495,404" stroke="#e6e6e6" stroke-width="1" fill="none"/>
<!-- rivets -->
<g fill="#1d6a3c"><circle cx="405.6" cy="424" r="1.7"/><circle cx="416" cy="438" r="1.7"/><circle cx="428.6" cy="447.4" r="1.9"/><circle cx="441.4" cy="448" r="1.9"/><circle cx="466.6" cy="441" r="1.9"/><circle cx="487.2" cy="433" r="1.9"/><circle cx="506.2" cy="423.7" r="1.9"/><circle cx="548.6" cy="360.3" r="1.8"/></g>
<g fill="#38a060"><circle cx="405" cy="423.3" r="1.2"/><circle cx="415.4" cy="437.3" r="1.2"/><circle cx="428" cy="446.6" r="1.4"/><circle cx="440.8" cy="447.2" r="1.4"/><circle cx="466" cy="440.2" r="1.4"/><circle cx="486.6" cy="432.2" r="1.4"/><circle cx="505.6" cy="422.9" r="1.4"/><circle cx="548" cy="359.5" r="1.3"/></g>
<!-- vents -->
<path d="M503,443.5 L504.7,467.5" stroke="#ffffff" stroke-width="2.8" stroke-linecap="round"/>
<path d="M514.6,437 L516.4,460" stroke="#ffffff" stroke-width="2.5" stroke-linecap="round"/>
<path d="M526.2,429.5 L527.7,452.5" stroke="#ffffff" stroke-width="2.1" stroke-linecap="round"/>
<!-- outline -->
<path d="M491,292 C484,288 470,288 462,290 C450,295 440,305 433,320 C428,330 422,338 418,343 C412,347 405,351 403,357 C401,365 401,375 401,383 L402,416 C403,424 405,430 408,434 C414,440 419,447 421,452 C423,460 424,468 426,476 C429,484 432,490 438,494 C444,499 450,503 460,504 C480,500 500,493 517,486 C528,481 536,476 540,470 L545,460 L544,444 L552,440 L550,401 L549,380 L551,373 C553,366 554,360 552,349 C540,352 530,356 520,360 C510,364 500,369 493,369 C483,368 474,360 469,350 C465,340 466,325 471,314 C475,306 482,300 487,297 L491,292 Z" fill="none" stroke="#ffffff" stroke-width="1.8"/>
<!-- BBOX lines -->
<g stroke="#ffffff" stroke-width="1.15" fill="none" stroke-linecap="round">
<path d="M366,303.4 L337,302.4 L343,345.5 M337,302.4 L352.4,299"/>
<path d="M399,286.9 L412.8,285.2 L438.6,285.2 M412.8,285.2 L416.2,323"/>
<path d="M465,307 L498,308.4 L510,304 M498,308.4 L502.4,354"/>
<path d="M524,287.8 L552.4,288.6 L543.8,292 M552.4,288.6 L555.9,328.3"/>
<path d="M362.8,469.7 L368,507.6 L397.2,510.3 M368,507.6 L383.4,498"/>
<path d="M540.3,473.7 L566.2,474.8 L558.7,483.4 M566.2,474.8 L564,441.4"/>
<path d="M488.6,519 L517.7,522.2 L529.6,511.5 M517.7,522.2 L514.5,483.4"/>
</g>

<!-- NAV CUBE -->
<path d="M234,643.5 L265.5,645 L262,649 L230,649 Z" fill="#d2d2d2"/>
<path d="M262,649 L265.5,645 L266,676 L262,682 Z" fill="#b9b9b9"/>
<rect x="230" y="649" width="32" height="33" fill="#c6c6c6"/>
<path d="M247,648 L256,648" stroke="#555" stroke-width="0.8" stroke-dasharray="1 0.6"/>
<path d="M262.5,663 L264,658" stroke="#666" stroke-width="0.8"/>
<text x="243.5" y="669.5" font-family="Liberation Sans" font-size="6.3" fill="#3a3a3a" text-anchor="middle">Avant</text>
<path d="M228,682 V652" stroke="#7777cc" stroke-width="1.3"/>
<path d="M225,653 L228,648 L231,653 Z" fill="#7777cc"/>
<text x="226" y="645" font-family="Liberation Sans" font-size="5" fill="#8888dd">z</text>
<path d="M228,682 L258,683.5" stroke="#cc7777" stroke-width="1.4"/>
<path d="M257,680.5 L262,683.7 L257,686.5 Z" fill="#cc7777"/>
<text x="267" y="687" font-family="Liberation Sans" font-size="5" fill="#dd8888">x</text>
<path d="M229,680 L236,672" stroke="#9fd39f" stroke-width="1.2"/>
<circle cx="292.5" cy="679.5" r="8.3" fill="#f6f6f6"/>
<path d="M287.3,677.3 V674.8 H289.8 M295.2,674.8 H297.7 V677.3 M297.7,681.7 V684.2 H295.2 M289.8,684.2 H287.3 V681.7" stroke="#505050" stroke-width="1" fill="none"/>
<circle cx="292.5" cy="679.5" r="2.6" stroke="#505050" stroke-width="0.9" fill="none"/>
<path d="M292.5,679.5 V682 M292.5,679.5 L290.4,678.2 M292.5,679.5 L294.6,678.2" stroke="#505050" stroke-width="0.7"/>
<!-- viewport bottom line -->
<rect x="215" y="37.8" width="1065" height="1" fill="#f8f8f8"/>
<rect x="1277.6" y="38" width="1.2" height="656" fill="#f8f8f8"/>
<rect x="215" y="693.3" width="1065" height="1.4" fill="#f6f6f6"/>
</svg>

<!-- NOTIFICATIONS -->
<div class="a" style="left:1086px;top:567.5px;width:188.5px;height:37.5px;border:1.2px solid #8fd3a0;border-left:4px solid #0a9a3a;border-radius:3px;background:#fff"></div>
<div class="a nt" style="left:1093.5px;top:571px;">Nom de l'objet : Helmet_face.stl</div>
<div class="a nt" style="left:1093.5px;top:578.5px;">Taille : 204.788 x 137.88 x 262.889 mm</div>
<div class="a nt" style="left:1093.5px;top:586px;">Volume : 433987 mm<span style="position:relative;top:-2.5px;font-size:4px;line-height:0">3</span></div>
<div class="a nt" style="left:1093.5px;top:593.5px;">Triangles : 1710612</div>
<div class="a" style="left:1257px;top:571px;width:12.5px;height:12.5px;border-radius:50%;background:#ececec"></div>
<svg style="left:1259.5px;top:573.5px" width="8" height="8"><path d="M0.5 0.5 L7.5 7.5 M7.5 0.5 L0.5 7.5" stroke="#888" stroke-width="0.9"/></svg>
<div class="a" style="left:1263.5px;top:595.5px;width:6px;height:6px;border-radius:50%;background:#f0f0f0"><div class="a" style="left:1.2px;top:2.5px;width:3.6px;height:1px;background:#cfcfcf"></div></div>

<div class="a" style="left:1086px;top:610.5px;width:188.5px;height:37.5px;border:1.2px solid #8fd3a0;border-left:4px solid #0a9a3a;border-radius:3px;background:#fff"></div>
<div class="a nt" style="left:1093.5px;top:614px;">Le traitement du modèle 'Helmet_face.stl' avec plus</div>
<div class="a nt" style="left:1093.5px;top:621.5px;">de 1 million de triangles peut être lent. Il est</div>
<div class="a nt" style="left:1093.5px;top:629px;">fortement recommandé de simplifier le modèle.</div>
<div class="a nt" style="left:1093.5px;top:636.5px;color:#1aa04a;text-decoration:underline">Simplifier le modèle</div>
<div class="a" style="left:1257px;top:614px;width:12.5px;height:12.5px;border-radius:50%;background:#ececec"></div>
<svg style="left:1259.5px;top:616.5px" width="8" height="8"><path d="M0.5 0.5 L7.5 7.5 M7.5 0.5 L0.5 7.5" stroke="#888" stroke-width="0.9"/></svg>
<div class="a" style="left:1263.5px;top:638.5px;width:6px;height:6px;border-radius:50%;background:#f0f0f0"><div class="a" style="left:1.2px;top:2.5px;width:3.6px;height:1px;background:#cfcfcf"></div></div>

<div class="a" style="left:1086px;top:653.5px;width:188.5px;height:37.5px;border:1.2px solid #8fd3a0;border-left:4px solid #0a9a3a;border-radius:3px;background:#fff"></div>
<div class="a nt" style="left:1093.5px;top:657px;">Le traitement du modèle 'Breastplate_front.stl' avec</div>
<div class="a nt" style="left:1093.5px;top:664.5px;">plus de 1 million de triangles peut être lent. Il est</div>
<div class="a nt" style="left:1093.5px;top:672px;">fortement recommandé de simplifier le modèle.</div>
<div class="a nt" style="left:1093.5px;top:679.5px;color:#1aa04a;text-decoration:underline">Simplifier le modèle</div>
<div class="a" style="left:1257px;top:657px;width:12.5px;height:12.5px;border-radius:50%;background:#ececec"></div>
<svg style="left:1259.5px;top:659.5px" width="8" height="8"><path d="M0.5 0.5 L7.5 7.5 M7.5 0.5 L0.5 7.5" stroke="#888" stroke-width="0.9"/></svg>
<div class="a" style="left:1263.5px;top:681.5px;width:6px;height:6px;border-radius:50%;background:#f0f0f0"><div class="a" style="left:1.2px;top:2.5px;width:3.6px;height:1px;background:#cfcfcf"></div></div>
</div></div>
</body></html>
